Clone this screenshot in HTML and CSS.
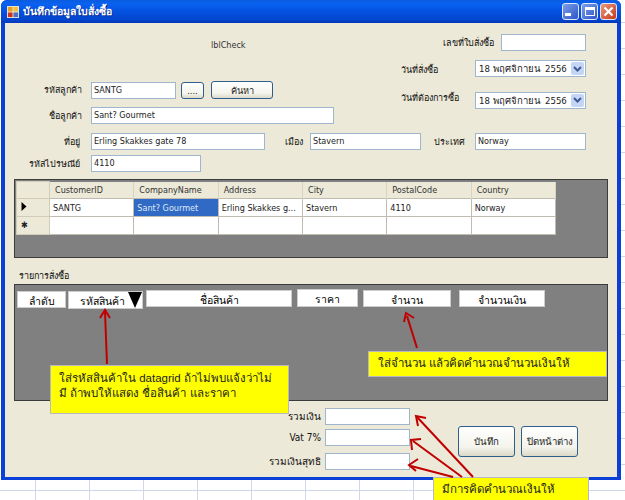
FILE: index.html
```html
<!DOCTYPE html>
<html lang="th">
<head>
<meta charset="utf-8">
<title>บันทึกข้อมูลใบสั่งซื้อ</title>
<link rel="stylesheet" href="styles.css">
</head>
<body>
<div class="window">
  <header class="titlebar">
    <svg class="appicon" width="12" height="12" viewBox="0 0 13 13"><rect x="0" y="0" width="13" height="13" fill="#e8e4d8"/><rect x="1" y="1" width="5" height="5" fill="#e8a020"/><rect x="7" y="1" width="5" height="5" fill="#f0c040"/><rect x="1" y="7" width="5" height="5" fill="#d03020"/><rect x="7" y="7" width="5" height="5" fill="#5070c0"/></svg>
    <span class="title">บันทึกข้อมูลใบสั่งซื้อ</span>
    <span class="winbtn"><i class="glyph-min"></i></span>
    <span class="winbtn"><i class="glyph-max"></i></span>
    <span class="winbtn close"><svg width="11" height="11" viewBox="0 0 11 11"><path d="M1.5 1.5 L9.5 9.5 M9.5 1.5 L1.5 9.5" stroke="#fff" stroke-width="2.2"/></svg></span>
  </header>
  <main class="form">
    <div class="top">
      <div class="top-left">
        <div class="lblcheck">lblCheck</div>
        <div class="row row-cust">
          <label class="lab">รหัสลูกค้า</label>
          <span class="tb w85">SANTG</span>
          <button class="btn dots">....</button>
          <button class="btn search">ค้นหา</button>
        </div>
        <div class="row row-name">
          <label class="lab">ชื่อลูกค้า</label>
          <span class="tb w243">Sant? Gourmet</span>
        </div>
      </div>
      <div class="top-right">
        <div class="row row-order">
          <label class="lab-r">เลขที่ใบสั่งซื้อ</label>
          <span class="tb w85"></span>
        </div>
        <div class="row row-date1">
          <label class="lab-d">วันที่สั่งซื้อ</label>
          <span class="tb combo">18 พฤศจิกายน&nbsp; 2556<b class="drop"><svg width="9" height="6" viewBox="0 0 9 6"><path d="M1 1 L4.5 4.5 L8 1" fill="none" stroke="#3d5a94" stroke-width="2"/></svg></b></span>
        </div>
        <div class="row row-date2">
          <label class="lab-d">วันที่ต้องการซื้อ</label>
          <span class="tb combo">18 พฤศจิกายน&nbsp; 2556<b class="drop"><svg width="9" height="6" viewBox="0 0 9 6"><path d="M1 1 L4.5 4.5 L8 1" fill="none" stroke="#3d5a94" stroke-width="2"/></svg></b></span>
        </div>
      </div>
    </div>
    <div class="row row-addr">
      <label class="lab lab-2">ที่อยู่</label>
      <span class="tb w174">Erling Skakkes gate 78</span>
      <label class="lab-city">เมือง</label>
      <span class="tb w111">Stavern</span>
      <label class="lab-country">ประเทศ</label>
      <span class="tb w111">Norway</span>
    </div>
    <div class="row row-post">
      <label class="lab lab-2">รหัสไปรษณีย์</label>
      <span class="tb w110">4110</span>
    </div>
    <section class="gridbox">
      <table class="grid">
        <thead>
          <tr><th class="rowhead"></th><th>CustomerID</th><th>CompanyName</th><th>Address</th><th>City</th><th>PostalCode</th><th>Country</th></tr>
        </thead>
        <tbody>
          <tr><td class="rowhead"><svg width="6" height="9" viewBox="0 0 6 9"><path d="M0.5 0 L5.5 4.5 L0.5 9 Z" fill="#000"/></svg></td><td>SANTG</td><td class="sel">Sant? Gourmet</td><td>Erling Skakkes g...</td><td>Stavern</td><td>4110</td><td>Norway</td></tr>
          <tr><td class="rowhead star">✱</td><td></td><td></td><td></td><td></td><td></td><td></td></tr>
        </tbody>
      </table>
    </section>
    <div class="listlabel">รายการสั่งซื้อ</div>
    <section class="itempanel">
      <span class="ih ih1">ลำดับ</span>
      <span class="ih ih2">รหัสสินค้า<svg class="tri" width="14" height="16" viewBox="0 0 14 16"><path d="M0 0 H14 L7 16 Z" fill="#000"/></svg></span>
      <span class="ih ih3">ชื่อสินค้า</span>
      <span class="ih ih4">ราคา</span>
      <span class="ih ih5">จำนวน</span>
      <span class="ih ih6">จำนวนเงิน</span>
    </section>
    <div class="bottom">
      <div class="totals">
        <div class="row tot1"><label class="lab-t">รวมเงิน</label><span class="tb w85"></span></div>
        <div class="row tot2"><label class="lab-t">Vat 7%</label><span class="tb w85"></span></div>
        <div class="row tot3"><label class="lab-t">รวมเงินสุทธิ</label><span class="tb w85"></span></div>
      </div>
      <div class="actions">
        <button class="btn big">บันทึก</button>
        <button class="btn big">ปิดหน้าต่าง</button>
      </div>
    </div>
  </main>
</div>
<div class="note note1">ใส่รหัสสินค้าใน datagrid ถ้าไม่พบแจ้งว่าไม่<br>มี ถ้าพบให้แสดง ชื่อสินค้า และราคา</div>
<div class="note note2">ใส่จำนวน แล้วคิดคำนวณจำนวนเงินให้</div>
<div class="note note3">มีการคิดคำนวณเงินให้</div>
<svg class="arrows" width="625" height="500" viewBox="0 0 625 500">
  <g fill="none" stroke="#c00000" stroke-width="2">
    <path d="M107 364 L105 312"/>
    <path d="M100 318 L105 310 L110 318"/>
    <path d="M417 348 L407 316"/>
    <path d="M404 322 L406 313 L414 318"/>
    <path d="M473 477 L417 417"/>
    <path d="M418 426 L416 416 L426 418"/>
    <path d="M462 477 L413 441"/>
    <path d="M412 450 L411 440 L421 439"/>
    <path d="M453 477 L411 466"/>
    <path d="M418 459 L409 465 L416 471"/>
  </g>
</svg>
</body>
</html>
```
FILE: styles.css
```css
* { box-sizing: border-box; }
html, body { margin: 0; padding: 0; }
body {
  width: 625px; height: 500px; overflow: hidden; position: relative;
  font-family: "DejaVu Sans Condensed", "DejaVu Sans", "Liberation Sans", sans-serif;
  font-stretch: condensed;
  font-size: 9px; color: #222;
  background-color: #fff;
  background-image:
    linear-gradient(#d0d7e5, #d0d7e5),
    repeating-linear-gradient(90deg, transparent 0 53px, #d0d7e5 53px 54px),
    repeating-linear-gradient(180deg, transparent 0 22px, #d0d7e5 22px 23px, transparent 23px 26px);
  background-size: 625px 1px, 643px 20px, 4px 480px;
  background-position: 0 490px, -18px 480px, 621px 0;
  background-repeat: no-repeat;
}
.window {
  width: 620px; height: 480px; margin-left: 1px;
  background: #0a3fd8;
  border-radius: 6px 6px 0 0;
  padding: 0 4px 3px 4px;
  display: flex; flex-direction: column;
}
.titlebar {
  height: 23px; flex: none; margin: 0 -4px 0 -4px; padding: 0 3px 0 6px;
  display: flex; align-items: center; gap: 2px;
  border-radius: 6px 6px 0 0;
  background: linear-gradient(#0a5be0 0, #0a62f0 4px, #0450e0 12px, #0344cc 20px, #0236b8 23px);
}
.appicon { margin-right: 2px; }
.title { flex: 1; color: #fff; font-weight: bold; font-size: 10.5px; text-shadow: 1px 1px 0 #0a2a90; }
.winbtn {
  width: 17px; height: 17px; border: 1px solid #dfe8fa; border-radius: 3px;
  background: linear-gradient(135deg, #7f9fe8, #2c55c8);
  display: flex; align-items: center; justify-content: center; position: relative;
}
.winbtn.close { background: linear-gradient(135deg, #e8987c, #c8381c); margin-right: 1px; }
.glyph-min { width: 6px; height: 3px; background: #fff; align-self: flex-end; margin: 0 5px 3px 0; }
.glyph-max { width: 10px; height: 9px; border: 1px solid #fff; border-top-width: 3px; }
.form {
  flex: 1; background: #ece9d8; display: flex; flex-direction: column; min-height: 0;
}
.row { display: flex; align-items: center; }
.top { display: flex; justify-content: space-between; height: 110px; }
.top-left { width: 340px; }
.top-right { width: 185px; margin-right: 31px; }
.lblcheck { margin: 15px 0 0 206px; height: 14px; line-height: 14px; color: #333; }
.lab { width: 77px; text-align: right; color: #111; flex: none; }
.lab-2 { padding-right: 2px; }
.row-cust { margin-top: 29px; }
.tb {
  height: 17px; background: #fff; border: 1px solid #9fb6cc; display: block; flex: none;
  line-height: 15px; padding-left: 2px; color: #222; white-space: nowrap;
}
.w85 { width: 85px; }
.w243 { width: 243px; }
.w174 { width: 174px; }
.w111 { width: 111px; }
.w110 { width: 110px; }
.row-cust .lab, .row-name .lab, .row-addr > .lab, .row-post > .lab { margin-right: 9px; }
.btn {
  border: 1px solid #2f5f8c; border-radius: 3px; background: linear-gradient(#fff, #f4f3ec 70%, #dcd9c8);
  font-family: inherit; font-stretch: condensed; font-size: 9.2px; color: #222; padding: 0;
}
.dots { width: 23px; height: 17px; margin-left: 5px; }
.search { width: 62px; height: 18px; margin-left: 7px; }
.row-name { margin-top: 8px; }
.row-order { margin-top: 11px; justify-content: flex-end; }
.lab-r { margin-right: 7px; color: #111; }
.row-date1 { margin-top: 9px; }
.row-date2 { margin-top: 14px; }
.row-date1 .lab-d { margin-top: 3px; }
.row-date2 .lab-d { margin-bottom: 4px; }
.lab-d { width: 74px; flex: none; color: #111; }
.combo { width: 111px; position: relative; padding-left: 3px; font-size: 9.5px; }
.drop {
  position: absolute; right: 1px; top: 1px; width: 13px; height: 13px; background: #c5d5f5; border-radius: 2px;
  display: flex; align-items: center; justify-content: center;
}
.lab-city { margin-left: 20px; width: 25px; flex: none; color: #111; }
.lab-country { margin-left: 13px; width: 41px; flex: none; color: #111; }
.row-post { margin-top: 5px; }
.gridbox {
  margin: 7px 0 0 9px; width: 594px; height: 79px; background: #808080;
  border: 1px solid #3c3c3c; padding: 1px 0 0 1px;
}
.grid { border-collapse: collapse; table-layout: fixed; width: 540px; }
.grid th {
  height: 17px; background: #ece9d8; font-weight: normal; text-align: left; padding: 0 0 0 5px;
  color: #333; white-space: nowrap; overflow: hidden;
  border-right: 1px solid #d8d4c0;
}
.grid th.rowhead, .grid td.rowhead { width: 33px; background: #ece9d8; border: 1px solid #d0ccb8; text-align: left; padding: 0 0 0 4px; }
.grid td {
  height: 18px; background: #fff; border: 1px solid #c0bdb0; padding: 0 0 0 3px; white-space: nowrap; overflow: hidden; color: #222;
}
.grid td.sel { background: #316ac5; color: #dfe8f6; }
.grid td.star { line-height: 1; }
.listlabel { margin: 10px 0 0 14px; height: 16px; line-height: 16px; color: #111; }
.itempanel {
  margin: 0 0 0 9px; width: 594px; height: 117px; background: #808080; border: 1px solid #3c3c3c;
  display: flex; align-items: flex-start; padding: 4px 0 0 2px;
}
.ih {
  background: #fff; border: 1px solid #ccc; color: #000; text-align: center; height: 17px; font-size: 10.5px; line-height: 18px; display: block; flex: none; position: relative;
}
.ih1 { width: 49px; margin-top: 2px; }
.ih2 { width: 75px; margin: 2px 0 0 2px; height: 18px; text-align: left; padding-left: 11px; }
.tri { position: absolute; right: 0; top: 0; }
.ih3 { width: 146px; margin: 1px 0 0 3px; }
.ih4 { width: 61px; margin: 0 0 0 5px; height: 18px; }
.ih5 { width: 88px; margin: 1px 0 0 5px; }
.ih6 { width: 86px; margin: 1px 0 0 8px; }
.bottom { display: flex; justify-content: flex-end; padding: 7px 39px 0 0; gap: 48px; }
.lab-t { width: 70px; text-align: right; margin-right: 4px; font-size: 10px; flex: none; color: #111; }
.tot2 { margin-top: 4px; }
.tot3 { margin-top: 7px; }
.actions { display: flex; gap: 6px; padding-top: 18px; }
.big { width: 57px; height: 31px; font-size: 9.6px; }
.note {
  position: absolute; background: #ffff00; border: 1px solid #b8b8c0; color: #222; font-size: 11.5px; line-height: 15px;
  font-family: "Liberation Sans", "Noto Sans", sans-serif; font-stretch: normal;
}
.note1 { left: 50px; top: 365px; width: 239px; height: 49px; padding: 5px 0 0 8px; }
.note2 { left: 368px; top: 351px; width: 239px; height: 26px; padding: 4px 0 0 9px; }
.note3 { left: 433px; top: 477px; width: 156px; height: 23px; padding: 4px 0 0 8px; border-bottom: 0; }
.arrows { position: absolute; left: 0; top: 0; pointer-events: none; }
```
